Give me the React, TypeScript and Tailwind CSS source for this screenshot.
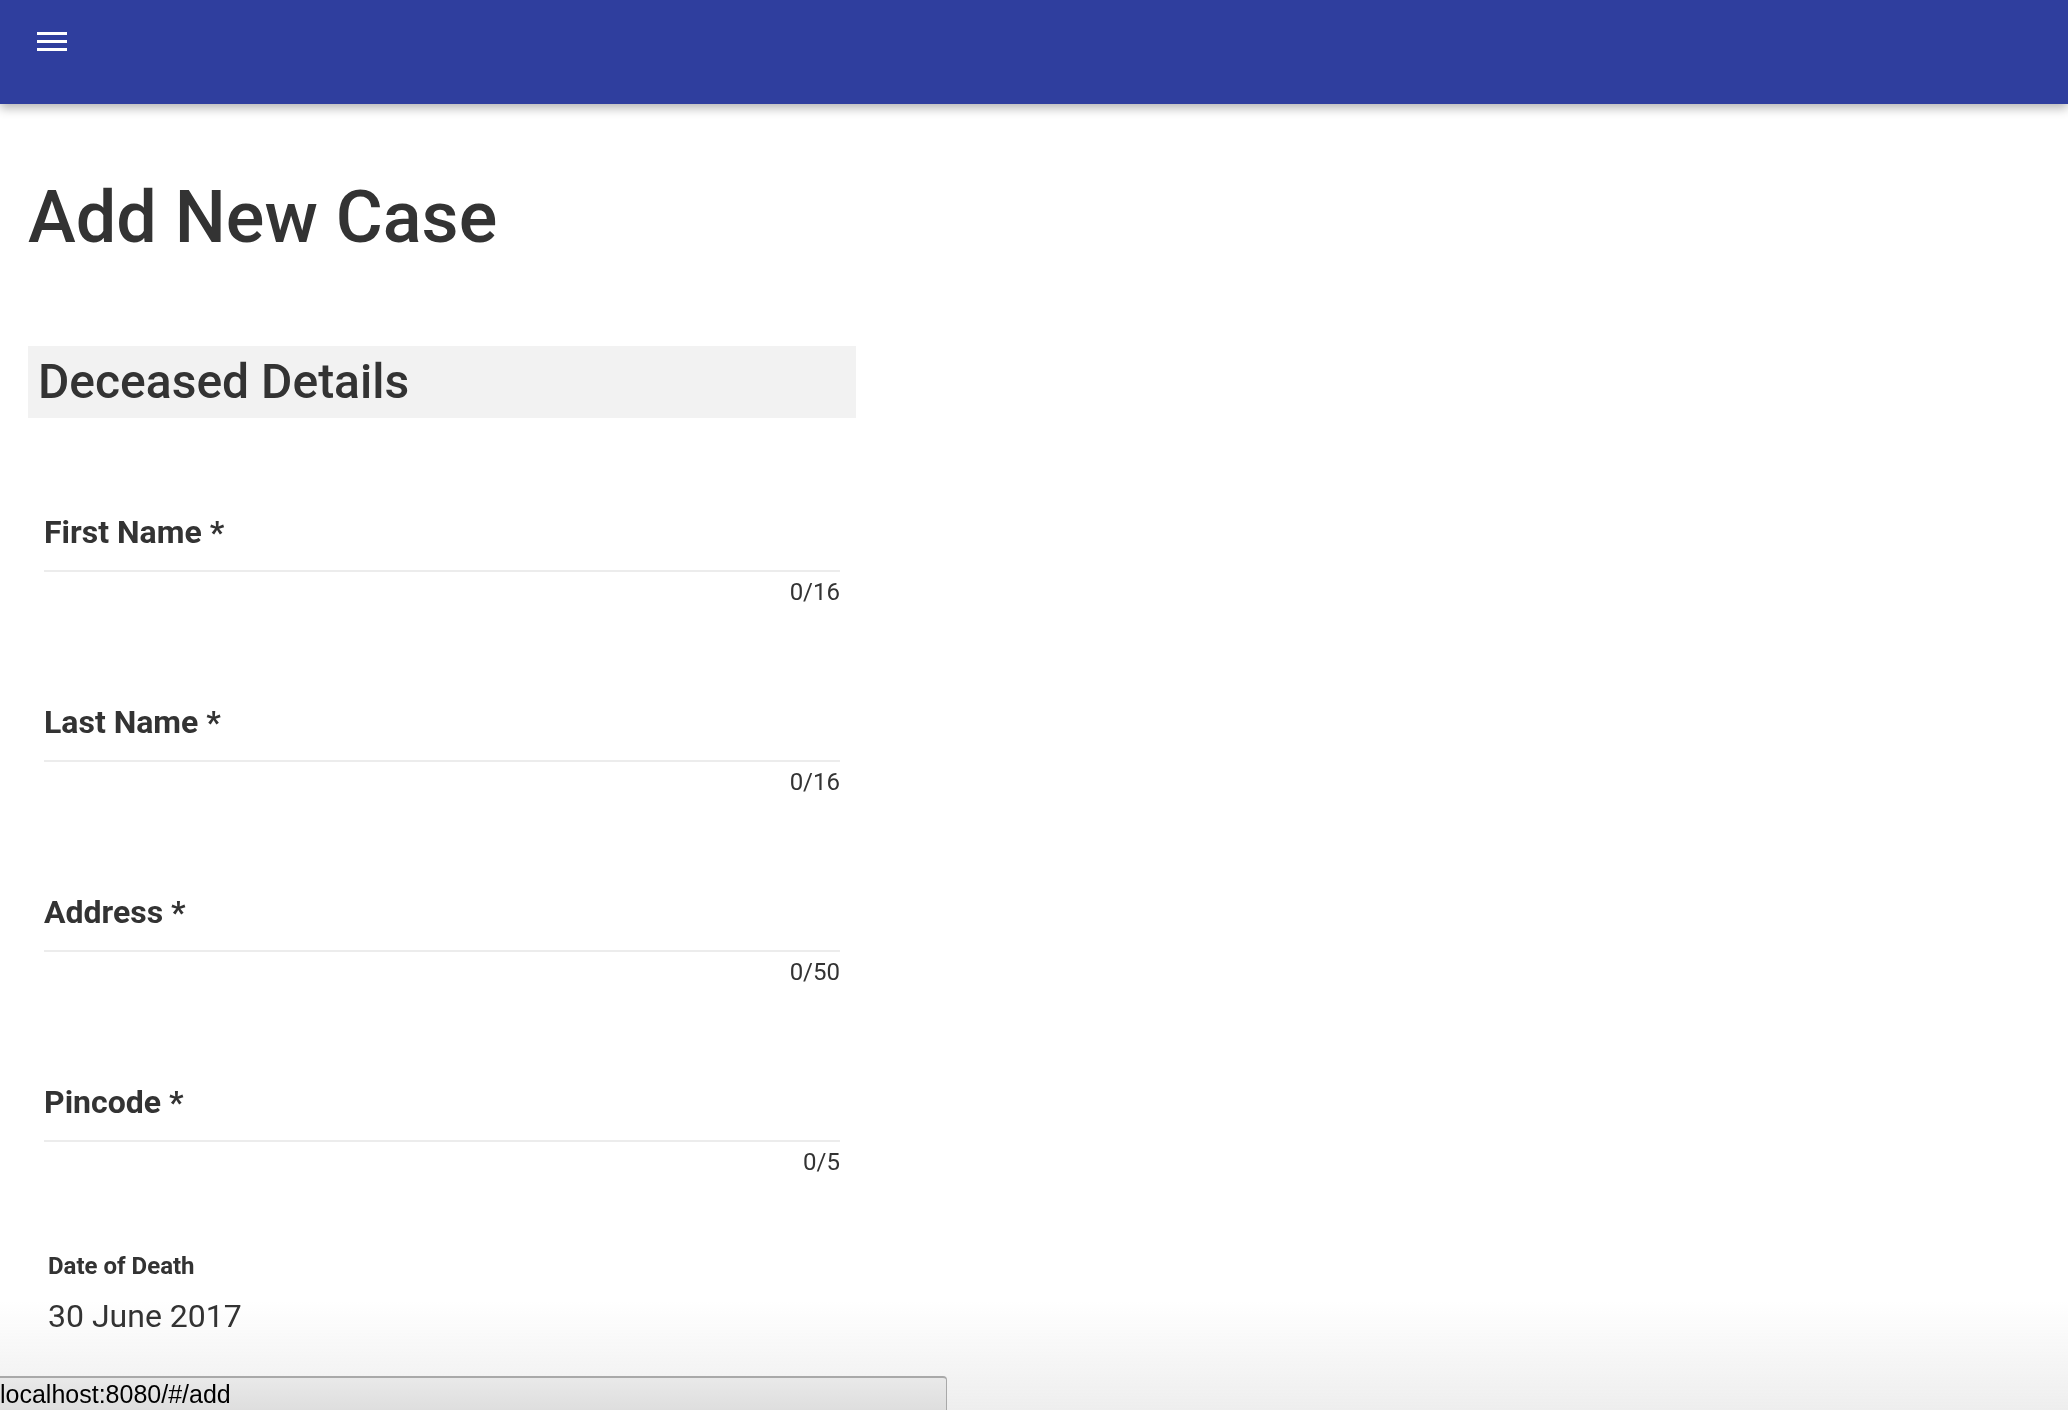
import React from 'react';

const fields = [
  { label: 'First Name *', max: 16 },
  { label: 'Last Name *', max: 16 },
  { label: 'Address *', max: 50 },
  { label: 'Pincode *', max: 5 },
];

const Field = ({ label, max }: { label: string; max: number }) => (
  <div className="mb-[102px] px-4">
    <div className="text-[32px] leading-none font-bold text-[#333]">{label}</div>
    <div className="mt-[22px] h-[2px] bg-[#ececec]" />
    <div className="mt-2 text-right text-[24px] leading-none text-[#333]">0/{max}</div>
  </div>
);

const App = () => {
  return (
    <div className="min-h-screen bg-white font-['Roboto',sans-serif]">
      {/* Top bar */}
      <header className="relative z-20 h-[104px] bg-[#2f3e9e] shadow-[0_4px_10px_rgba(0,0,0,0.3)]">
        <button className="absolute left-[37px] top-[32px]">
          <svg width="30" height="19" viewBox="0 0 30 19" fill="#fff">
            <rect x="0" y="0" width="30" height="3" />
            <rect x="0" y="8" width="30" height="3" />
            <rect x="0" y="16" width="30" height="3" />
          </svg>
        </button>
      </header>

      {/* bottom fade behind content */}
      <div className="pointer-events-none fixed bottom-0 left-0 right-0 z-0 h-[110px] bg-gradient-to-b from-white/0 to-[#eeeeee]" />

      <main className="relative z-10 pl-[28px]">
        <h1 className="mt-[78px] text-[72px] leading-none font-medium text-[#333]">Add New Case</h1>

        <div className="mt-[92px] w-[828px]">
          <div className="flex h-[72px] items-center bg-[#f2f2f2] pl-[10px]">
            <h2 className="text-[48px] leading-none font-medium text-[#333]">Deceased Details</h2>
          </div>

          <div className="mt-[98px]">
            {fields.map((f) => (
              <Field key={f.label} label={f.label} max={f.max} />
            ))}
          </div>

          <div className="-mt-[22px] px-5">
            <div className="text-[24px] leading-none font-bold text-[#333]">Date of Death</div>
            <div className="mt-[22px] text-[32px] leading-none text-[#333]">30 June 2017</div>
          </div>
        </div>
      </main>

      {/* browser status bar */}
      <div className="fixed bottom-0 left-0 z-30 w-[947px] h-[34px] rounded-tr-[4px] border-t-2 border-r border-[#a9a9a9] bg-gradient-to-b from-[#e9e9e9] to-[#dedede] font-['Liberation_Sans',Arial,sans-serif] text-[25px] leading-[32px] text-black">
        localhost:8080/#/add
      </div>
    </div>
  );
};

export default App;
